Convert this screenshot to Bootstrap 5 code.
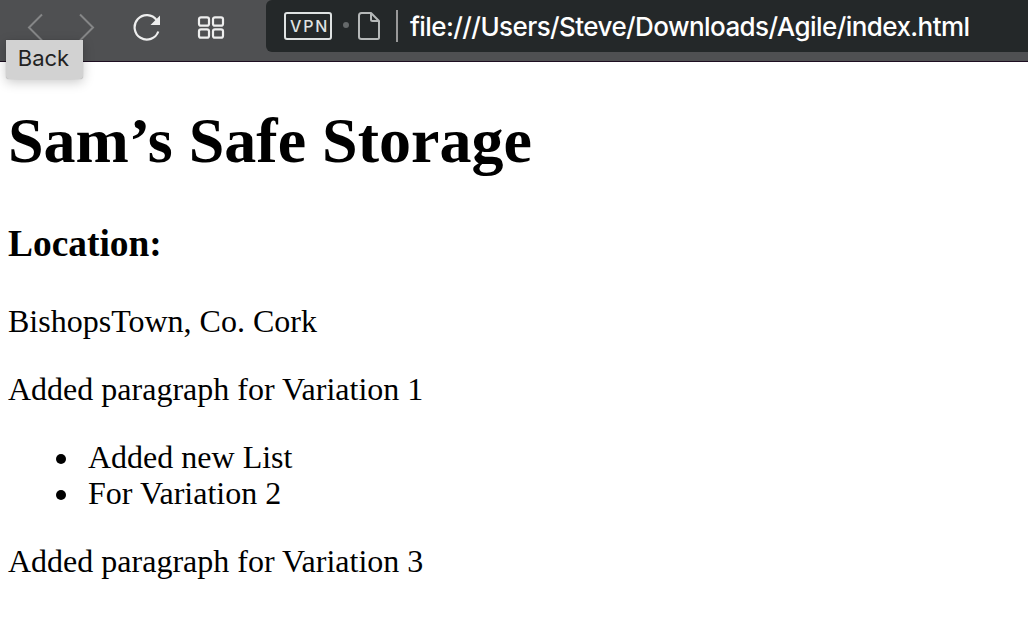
<!DOCTYPE html>
<html lang="en">
<head>
<meta charset="utf-8">
<meta name="viewport" content="width=device-width, initial-scale=1">
<title>Sam’s Safe Storage</title>
<link href="https://cdn.jsdelivr.net/npm/bootstrap@5.3.0/dist/css/bootstrap.min.css" rel="stylesheet">
<style>
body { overflow: hidden; background: #fff; color: #000; }
.toolbar { height: 62px; background: #4f5052; border-bottom: 1px solid #1d0e21; font-family: Inter, sans-serif; }
.tools { width: 266px; height: 52px; flex: none; padding: 1px 0 0 26px; }
.tools svg { display: block; flex: none; }
.reload { margin-left: 36px; }
.speed-dial { margin-left: 34px; }
.address { height: 52px; background: #242829; border-radius: 6px 0 0 6px; padding-left: 18px; }
.vpn { width: 48px; height: 28px; border: 2px solid #dfe2e2; border-radius: 3px; color: #dfe2e2; font-size: 16px; font-weight: 500; letter-spacing: 1.8px; line-height: 25px; padding-left: 4px; flex: none; }
.dot { width: 6px; height: 6px; margin: -2px 9px 0 11px; background: #65696a; flex: none; }
.divider { width: 2px; height: 32px; margin-left: 15px; background: #999; flex: none; }
.url { margin-left: 12px; padding-top: 2px; color: #fff; font-size: 26px; line-height: 32px; letter-spacing: -.58px; font-weight: 500; white-space: nowrap; }
.hint { left: 6px; top: 40px; width: 77px; height: 39px; padding-right: 2px; background: #d2d2d2; color: #222; font-size: 22px; line-height: 36px; border-radius: 0 0 3px 3px; box-shadow: 0 3px 12px rgba(0,0,0,.22), 0 0 1px rgba(0,0,0,.35); }
.page { padding: 43px 8px 0; font: 32px/36px "Liberation Serif", serif; }
.page h1 { font-size: 64px; line-height: 72px; font-weight: 700; margin: 0 0 46px; }
.page h3 { font-size: 37.44px; line-height: 42px; font-weight: 700; margin: 0 0 38px; }
.page p { margin: 0 0 32px; }
.page ul { margin: 0 0 32px; padding-left: 80px; list-style: none; }
.page li::before { content: ""; float: left; width: 10px; height: 10px; border-radius: 50%; background: #000; margin: 15px 0 0 -32px; }
</style>
</head>
<body>
<header class="toolbar position-relative d-flex align-items-start">
  <div class="tools d-flex align-items-center">
    <svg width="70" height="30" viewBox="0 0 70 30" fill="none" stroke="#858687" stroke-width="2"><path d="M16 2.500 3 15.500 16 28.500M54 2.500 67 15.500 54 28.500"/></svg>
    <svg class="reload" width="30" height="30" viewBox="0 0 30 30" fill="none" stroke="#eee" stroke-width="2.200"><path d="M24.700 8.200A12.200 12.200 0 1 0 26.300 19.500"/><path d="M28 3.500v9.500h-9.500z" fill="#eee" stroke="none"/></svg>
    <svg class="speed-dial" width="30" height="26" viewBox="0 0 30 26" fill="none" stroke="#eee" stroke-width="2.200"><rect x="3" y="3.300" width="10" height="8.400" rx="2"/><rect x="17" y="3.300" width="10" height="8.400" rx="2"/><rect x="3" y="15.300" width="10" height="8.400" rx="2"/><rect x="17" y="15.300" width="10" height="8.400" rx="2"/></svg>
  </div>
  <div class="address d-flex align-items-center flex-grow-1">
    <span class="vpn">VPN</span>
    <span class="dot rounded-circle"></span>
    <svg class="flex-shrink-0" width="23" height="30" viewBox="0 0 23 30" fill="none" stroke="#b5b8b8" stroke-width="2" stroke-linejoin="round"><path d="M3.500 2H13L21 10V26.500Q21 28 19.500 28H3.500Q1 28 1 26V4.500Q1 2 3.500 2ZM13 2V8.500Q13 10 14.500 10H21"/></svg>
    <span class="divider"></span>
    <span class="url">file:///Users/Steve/Downloads/Agile/index.html</span>
  </div>
  <div class="hint position-absolute text-center">Back</div>
</header>
<main class="page">
  <h1>Sam’s Safe Storage</h1>
  <h3>Location:</h3>
  <p>BishopsTown, Co. Cork</p>
  <p>Added paragraph for Variation 1</p>
  <ul>
    <li>Added new List</li>
    <li>For Variation 2</li>
  </ul>
  <p>Added paragraph for Variation 3</p>
</main>
<script src="https://cdn.jsdelivr.net/npm/bootstrap@5.3.0/dist/js/bootstrap.bundle.min.js"></script>
</body>
</html>
